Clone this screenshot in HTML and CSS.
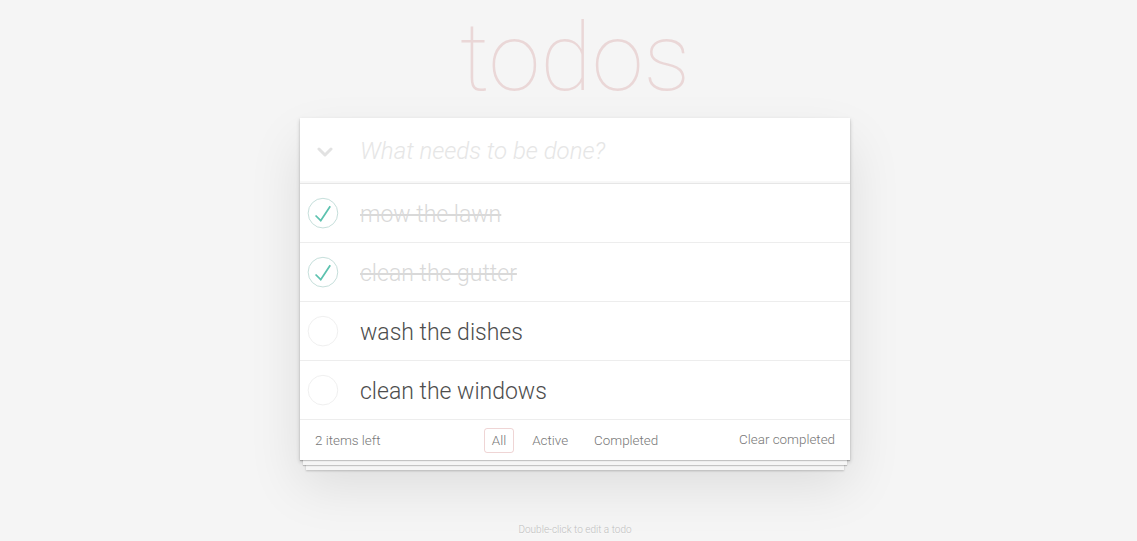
FILE: index.html
```html
<!DOCTYPE html>
<html lang="en">
<head>
<meta charset="utf-8">
<title>Todos</title>
<link rel="stylesheet" href="styles.css">
</head>
<body>
<div class="page">
  <h1 class="title">todos</h1>
  <section class="todoapp">
    <header class="new-row">
      <span class="toggle-all"><svg width="16" height="10" viewBox="0 0 16 10"><polyline points="2,2 8,8 14,2" fill="none" stroke="#e2e2e2" stroke-width="3" stroke-linecap="round" stroke-linejoin="round"/></svg></span>
      <input class="new-todo" placeholder="What needs to be done?">
    </header>
    <ul class="todo-list">
      <li class="item completed">
        <span class="toggle"><svg width="40" height="40" viewBox="-10 -18 100 135"><circle cx="50" cy="50" r="50" fill="none" stroke="#bddad5" stroke-width="3"/><path fill="#5dc2af" d="M72 25L42 71 27 56l-4 4 20 20 34-52z"/></svg></span>
        <span class="label">mow the lawn</span>
      </li>
      <li class="item completed">
        <span class="toggle"><svg width="40" height="40" viewBox="-10 -18 100 135"><circle cx="50" cy="50" r="50" fill="none" stroke="#bddad5" stroke-width="3"/><path fill="#5dc2af" d="M72 25L42 71 27 56l-4 4 20 20 34-52z"/></svg></span>
        <span class="label">clean the gutter</span>
      </li>
      <li class="item">
        <span class="toggle"><svg width="40" height="40" viewBox="-10 -18 100 135"><circle cx="50" cy="50" r="50" fill="none" stroke="#ededed" stroke-width="3"/></svg></span>
        <span class="label">wash the dishes</span>
      </li>
      <li class="item">
        <span class="toggle"><svg width="40" height="40" viewBox="-10 -18 100 135"><circle cx="50" cy="50" r="50" fill="none" stroke="#ededed" stroke-width="3"/></svg></span>
        <span class="label">clean the windows</span>
      </li>
    </ul>
    <footer class="footer">
      <span class="todo-count">2 items left</span>
      <ul class="filters">
        <li><a class="filter selected" href="#/">All</a></li>
        <li><a class="filter" href="#/active">Active</a></li>
        <li><a class="filter" href="#/completed">Completed</a></li>
      </ul>
      <span class="clear-completed">Clear completed</span>
    </footer>
  </section>
  <footer class="info">Double-click to edit a todo</footer>
</div>
</body>
</html>
```

FILE: styles.css
```css
html, body {
  margin: 0;
  padding: 0;
}
body {
  background: #f5f5f5;
  color: #4d4d4d;
  font-family: "Roboto", "Liberation Sans", sans-serif;
  font-size: 14px;
  font-weight: 300;
  line-height: 1.4;
  padding-left: 13px;
}
.page {
  width: 550px;
  margin: 0 auto;
}
.title {
  margin: 0;
  height: 118px;
  box-sizing: border-box;
  padding-top: 3px;
  font-size: 94px;
  font-weight: 100;
  line-height: 110px;
  text-align: center;
  color: rgba(175, 47, 47, 0.15);
}
.todoapp {
  background: #fff;
  box-shadow: 0 1px 1px rgba(0,0,0,0.2),
              0 8px 0 -3px #f6f6f6,
              0 9px 1px -3px rgba(0,0,0,0.2),
              0 16px 0 -6px #f6f6f6,
              0 17px 2px -6px rgba(0,0,0,0.2),
              0 2px 4px 0 rgba(0,0,0,0.2),
              0 25px 50px 0 rgba(0,0,0,0.1);
}
.new-row {
  display: flex;
  align-items: center;
  height: 65px;
  box-shadow: inset 0 -2px 1px rgba(0,0,0,0.03);
  border-bottom: 1px solid #e6e6e6;
}
.toggle-all {
  width: 60px;
  display: flex;
  justify-content: center;
  align-items: center;
  padding-right: 10px;
  box-sizing: border-box;
}
.toggle-all svg { display: block; margin-top: 2px; }
.new-todo {
  flex: 1;
  border: 0;
  outline: 0;
  background: transparent;
  font-family: inherit;
  font-size: 24px;
  font-weight: 300;
  color: #4d4d4d;
  padding: 0;
  margin: 0;
}
.new-todo::placeholder {
  font-style: italic;
  font-weight: 300;
  color: #e6e6e6;
}
.todo-list {
  list-style: none;
  margin: 0;
  padding: 0;
}
.item {
  display: flex;
  align-items: center;
  height: 58px;
  border-bottom: 1px solid #ededed;
  font-size: 23px;
}
.toggle {
  width: 40px;
  margin-right: 20px;
  display: flex;
  align-items: center;
}
.toggle svg { display: block; }
.label {
  line-height: 1.2;
  color: #4d4d4d;
  padding-top: 4px;
}
.completed .label {
  color: #d9d9d9;
  text-decoration: line-through;
}
.footer {
  display: grid;
  grid-template-columns: 1fr auto 1fr;
  align-items: center;
  height: 40px;
  padding: 0 15px;
  color: #777;
  font-size: 13.4px;
}
.todo-count { justify-self: start; line-height: 20px; padding-top: 1px; }
.filters {
  display: flex;
  gap: 4px;
  list-style: none;
  margin: 0;
  padding: 0;
}
.filter {
  display: block;
  margin: 0 3px;
  padding: 3px 7px;
  line-height: 17px;
  color: inherit;
  text-decoration: none;
  border: 1px solid transparent;
  border-radius: 3px;
}
.filter.selected {
  border-color: rgba(175, 47, 47, 0.2);
}
.clear-completed {
  justify-self: end;
  line-height: 20px;
}
.info {
  margin-top: 63px;
  text-align: center;
  font-size: 10px;
  color: #bfbfbf;
  text-shadow: 0 1px 0 rgba(255,255,255,0.5);
}
```
